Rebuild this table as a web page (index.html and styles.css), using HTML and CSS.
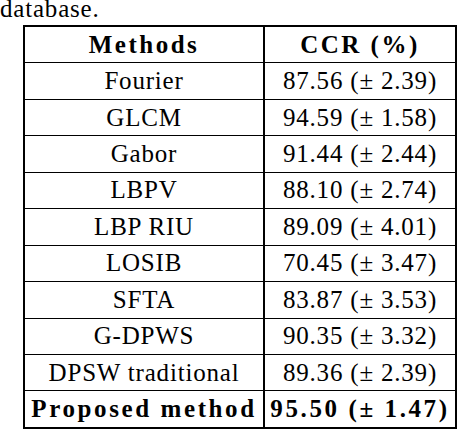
FILE: index.html
```html
<!DOCTYPE html>
<html lang="en">
<head>
<meta charset="utf-8">
<title>CCR table</title>
<link rel="stylesheet" href="styles.css">
</head>
<body>
<p class="lead">database.</p>
<table class="results">
  <thead>
    <tr><th class="col-method">Methods</th><th class="col-ccr">CCR (%)</th></tr>
  </thead>
  <tbody>
    <tr><td class="col-method">Fourier</td><td class="col-ccr">87.56 (± 2.39)</td></tr>
    <tr><td class="col-method">GLCM</td><td class="col-ccr">94.59 (± 1.58)</td></tr>
    <tr><td class="col-method">Gabor</td><td class="col-ccr">91.44 (± 2.44)</td></tr>
    <tr><td class="col-method">LBPV</td><td class="col-ccr">88.10 (± 2.74)</td></tr>
    <tr><td class="col-method">LBP RIU</td><td class="col-ccr">89.09 (± 4.01)</td></tr>
    <tr><td class="col-method">LOSIB</td><td class="col-ccr">70.45 (± 3.47)</td></tr>
    <tr><td class="col-method">SFTA</td><td class="col-ccr">83.87 (± 3.53)</td></tr>
    <tr><td class="col-method">G-DPWS</td><td class="col-ccr">90.35 (± 3.32)</td></tr>
    <tr><td class="col-method">DPSW traditional</td><td class="col-ccr">89.36 (± 2.39)</td></tr>
    <tr class="best"><td class="col-method">Proposed method</td><td class="col-ccr">95.50 (± 1.47)</td></tr>
  </tbody>
</table>
</body>
</html>
```

FILE: styles.css
```css
html, body {
  margin: 0;
  padding: 0;
  background: #fff;
  color: #000;
  font-family: "Liberation Serif", "Times New Roman", serif;
  font-size: 25px;
}

.lead {
  margin: 0;
  height: 18px;
  line-height: 18px;
  letter-spacing: 0.8px;
}

.results {
  margin: 7px 0 0 23px;
  width: 434px;
  border: 2px solid #000;
  border-spacing: 0;
  table-layout: fixed;
  font-family: "Liberation Serif", "Times New Roman", serif;
  font-size: 25px;
}

.results th,
.results td {
  box-sizing: content-box;
  height: 35.45px;
  padding: 0;
  line-height: 28px;
  vertical-align: middle;
  text-align: center;
  white-space: nowrap;
  border-bottom: 1px solid #000;
  letter-spacing: 0.8px;
}

.results th {
  font-weight: bold;
  letter-spacing: 2.5px;
}

.results .col-method {
  width: 238px;
  border-right: 2px solid #000;
}

.results .col-ccr {
  width: 190px;
}

.results tr:last-child td {
  border-bottom: none;
}

.results .best td {
  font-weight: bold;
  letter-spacing: 2.6px;
}
```
